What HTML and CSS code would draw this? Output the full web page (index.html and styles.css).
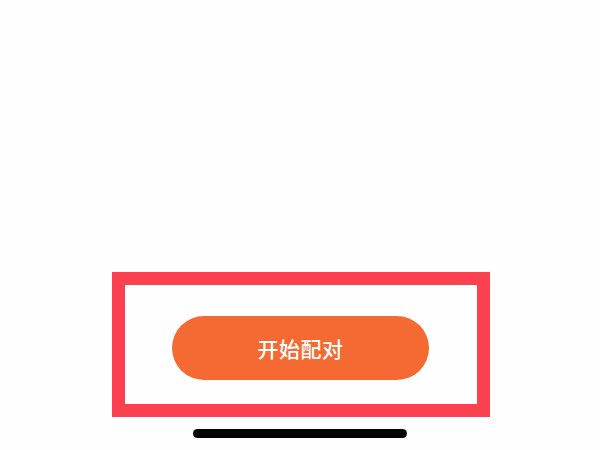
FILE: index.html
```html
<!DOCTYPE html>
<html>
<head>
<meta charset="utf-8">
<link rel="stylesheet" href="styles.css">
</head>
<body>
<div class="page">
  <div class="frame">
    <button class="pair-btn">开始配对</button>
  </div>
  <div class="home-bar"></div>
</div>
</body>
</html>
```
FILE: styles.css
```css
html, body {
  margin: 0;
  padding: 0;
  background: #fefefe;
}
.page {
  width: 600px;
  height: 450px;
  box-sizing: border-box;
  padding-top: 272px;
  display: flex;
  flex-direction: column;
  align-items: flex-start;
}
.frame {
  margin-left: 112px;
  width: 378px;
  height: 145px;
  box-sizing: border-box;
  border: 13px solid #fb4150;
  padding: 31px 0 0 47px;
  display: flex;
  align-items: flex-start;
}
.pair-btn {
  width: 257px;
  height: 64px;
  border: none;
  border-radius: 32px;
  background: #f56a32;
  color: #ffffff;
  font-family: "Noto Sans CJK SC", "Noto Sans", sans-serif;
  font-size: 21px;
  font-weight: 500;
  letter-spacing: 0.5px;
  padding: 0;
  display: flex;
  align-items: center;
  justify-content: center;
}
.home-bar {
  margin-top: 12px;
  margin-left: 193px;
  width: 214px;
  height: 9px;
  border-radius: 5px;
  background: #050505;
}
```
